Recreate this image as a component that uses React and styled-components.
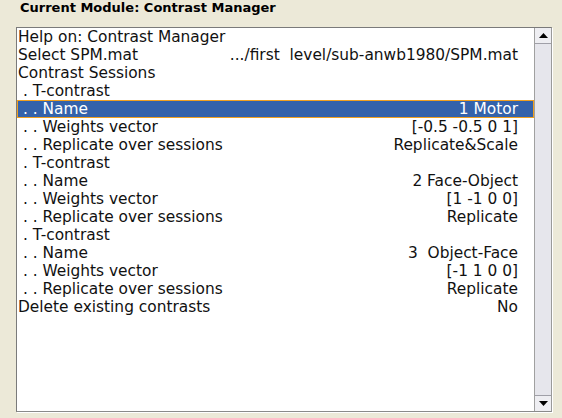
import React from 'react';
import styled, { createGlobalStyle } from 'styled-components';

const GlobalStyle = createGlobalStyle`
  html, body {
    margin: 0;
    padding: 0;
    background: #ece9d8;
  }
`;

const Page = styled.div`
  width: 562px;
  height: 418px;
  background: #ece9d8;
  font-family: 'DejaVu Sans', sans-serif;
  overflow: hidden;
`;

const Title = styled.div`
  height: 27px;
  padding-left: 20px;
  font-size: 13px;
  font-weight: bold;
  line-height: 16px;
  color: #000;
`;

const ListBox = styled.div`
  display: flex;
  margin-left: 16px;
  width: 536px;
  height: 385px;
  box-sizing: border-box;
  border: 1px solid #7a7a7a;
  border-right-color: #9a9a9a;
  border-bottom-color: #8a8a8a;
  box-shadow: 1px 1px 0 #ffffff;
`;

const List = styled.div`
  flex: 1;
  background: #fff;
  font-size: 15.4px;
  color: #000;
`;

const Row = styled.div`
  display: flex;
  justify-content: space-between;
  height: 18px;
  line-height: 18px;
  padding: 0 16px 0 1px;
  white-space: pre;
  background: ${({ selected }) => (selected ? '#3462aa' : 'transparent')};
  color: ${({ selected }) => (selected ? '#fff' : '#111')};
  box-shadow: ${({ selected }) => (selected ? 'inset 0 0 0 1px #f0a020' : 'none')};
`;

const Value = styled.span`
  text-align: right;
`;

const Scrollbar = styled.div`
  width: 16px;
  display: flex;
  flex-direction: column;
  background: #e6e6ec;
  border-left: 1px solid #a0a0a0;
`;

const ScrollButton = styled.div`
  height: 15px;
  display: flex;
  align-items: center;
  justify-content: center;
  background: #eeeef2;
  border-bottom: ${({ down }) => (down ? 'none' : '1px solid #a0a0a8')};
  border-top: ${({ down }) => (down ? '1px solid #a0a0a8' : 'none')};
`;

const Track = styled.div`
  flex: 1;
`;

const Arrow = ({ down }) => (
  <svg width="9" height="5" viewBox="0 0 9 5">
    <path d={down ? 'M0 0 H9 L4.5 5 Z' : 'M0 5 H9 L4.5 0 Z'} fill="#000" />
  </svg>
);

const rows = [
  ['Help on: Contrast Manager', ''],
  ['Select SPM.mat', '.../first  level/sub-anwb1980/SPM.mat'],
  ['Contrast Sessions', ''],
  [' . T-contrast', ''],
  [' . . Name', '1 Motor'],
  [' . . Weights vector', '[-0.5 -0.5 0 1]'],
  [' . . Replicate over sessions', 'Replicate&Scale'],
  [' . T-contrast', ''],
  [' . . Name', '2 Face-Object'],
  [' . . Weights vector', '[1 -1 0 0]'],
  [' . . Replicate over sessions', 'Replicate'],
  [' . T-contrast', ''],
  [' . . Name', '3  Object-Face'],
  [' . . Weights vector', '[-1 1 0 0]'],
  [' . . Replicate over sessions', 'Replicate'],
  ['Delete existing contrasts', 'No'],
];

export default function App() {
  return (
    <Page>
      <GlobalStyle />
      <Title>Current Module: Contrast Manager</Title>
      <ListBox>
        <List>
          {rows.map(([label, value], i) => (
            <Row key={i} selected={i === 4}>
              <span>{label}</span>
              <Value>{value}</Value>
            </Row>
          ))}
        </List>
        <Scrollbar>
          <ScrollButton>
            <Arrow />
          </ScrollButton>
          <Track />
          <ScrollButton down>
            <Arrow down />
          </ScrollButton>
        </Scrollbar>
      </ListBox>
    </Page>
  );
}
